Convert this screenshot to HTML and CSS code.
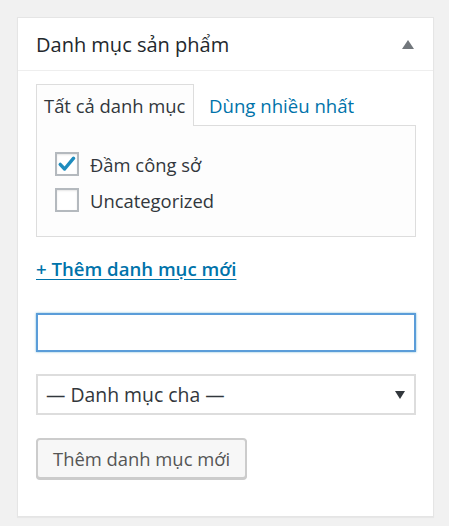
FILE: index.html
```html
<!DOCTYPE html>
<html lang="vi">
<head>
<meta charset="utf-8">
<title>Danh mục sản phẩm</title>
<link rel="stylesheet" href="styles.css">
</head>
<body>
<div class="postbox">
  <div class="postbox-header">
    <h2 class="hndle">Danh mục sản phẩm</h2>
    <span class="toggle-arrow"></span>
  </div>
  <div class="inside">
    <ul class="tabs">
      <li class="tab active">Tất cả danh mục</li>
      <li class="tab"><a href="#">Dùng nhiều nhất</a></li>
    </ul>
    <div class="tabs-panel">
      <ul class="checklist">
        <li><label class="item"><span class="checkbox checked"><svg viewBox="0 0 24 24" width="24" height="24"><path d="M5.2 12.4 L9.6 17 L18.6 6.2" fill="none" stroke="#1e8cbe" stroke-width="3.4" stroke-linecap="round" stroke-linejoin="round"/></svg></span>Đầm công sở</label></li>
        <li><label class="item"><span class="checkbox"></span>Uncategorized</label></li>
      </ul>
    </div>
    <a class="add-toggle" href="#">+ Thêm danh mục mới</a>
    <div class="add-form">
      <div class="text-input"></div>
      <div class="select"><span>— Danh mục cha —</span><span class="select-arrow"></span></div>
      <div class="actions"><span class="button">Thêm danh mục mới</span></div>
    </div>
  </div>
</div>
</body>
</html>
```

FILE: styles.css
```css
* { box-sizing: border-box; }
html, body { margin: 0; padding: 0; }
body {
  background: #f1f1f1;
  font-family: "Open Sans", "Noto Sans", sans-serif;
  color: #444;
  width: 449px;
  height: 526px;
  padding: 17px 15px 0 17px;
}
.postbox {
  background: #fff;
  border: 1px solid #e5e5e5;
  box-shadow: 0 1px 1px rgba(0,0,0,.04);
  height: 500px;
}
.postbox-header {
  height: 53px;
  border-bottom: 1px solid #eee;
  display: flex;
  align-items: center;
  justify-content: space-between;
  padding: 0 19px 0 18px;
}
.hndle {
  margin: 0;
  font-size: 20px;
  font-weight: 400;
  color: #23282d;
  line-height: 1;
  padding-top: 2px;
}
.toggle-arrow {
  width: 0; height: 0;
  border-left: 6px solid transparent;
  border-right: 6px solid transparent;
  border-bottom: 9px solid #72777c;
  margin-top: 1px;
}
.inside {
  padding: 13px 17px 0 18px;
}
.tabs {
  list-style: none;
  margin: 0;
  padding: 0;
  display: flex;
  height: 42px;
  position: relative;
  z-index: 1;
}
.tab {
  font-size: 18.4px;
  padding: 0 7px;
  line-height: 41px;
  border: 1px solid transparent;
  border-bottom: none;
}
.tab.active {
  background: #fdfdfd;
  border-color: #ddd;
  color: #32373c;
  height: 42px;
  width: 158px;
}
.tab a { color: #0073aa; text-decoration: none; padding-left: 7px; font-size: 18.6px; }
.tabs-panel {
  background: #fdfdfd;
  border: 1px solid #ddd;
  margin-top: -1px;
  height: 112px;
  padding: 26px 18px;
}
.checklist { list-style: none; margin: 0; padding: 0; display: flex; flex-direction: column; gap: 12px; }
.item {
  display: flex;
  align-items: center;
  gap: 11px;
  font-size: 18.4px;
  color: #32373c;
  height: 24px;
}
.checkbox {
  width: 24px; height: 24px;
  border: 2px solid #b4b9be;
  background: #fff;
  box-shadow: inset 0 1px 2px rgba(0,0,0,.1);
  display: flex;
  align-items: center;
  justify-content: center;
}
.checkbox svg { display: block; flex: none; }
.add-toggle {
  display: inline-block;
  margin-top: 20px;
  font-size: 18.6px;
  font-weight: 600;
  color: #0073aa;
  text-decoration: underline;
  text-underline-offset: 3px;
  line-height: 24px;
}
.add-form { margin-top: 32px; display: flex; flex-direction: column; }
.text-input {
  height: 39px;
  border: 2px solid #5b9dd9;
  box-shadow: 0 0 2px rgba(30,140,190,.6);
  background: #fff;
}
.select {
  margin-top: 22px;
  height: 41px;
  border: 2px solid #ddd;
  display: flex;
  align-items: center;
  justify-content: space-between;
  padding: 0 9px 0 8px;
  font-size: 19.4px;
  color: #32373c;
  background: #fff;
}
.select-arrow {
  width: 0; height: 0;
  border-left: 5px solid transparent;
  border-right: 5px solid transparent;
  border-top: 8px solid #32373c;
}
.actions { margin-top: 23px; display: flex; }
.button {
  display: inline-flex;
  align-items: center;
  white-space: nowrap;
  height: 41px;
  padding: 0 15px;
  border: 2px solid #ccc;
  border-radius: 4px;
  background: #f7f7f7;
  color: #555;
  font-size: 18.4px;
  box-shadow: 0 1px 0 #ccc;
}
```
